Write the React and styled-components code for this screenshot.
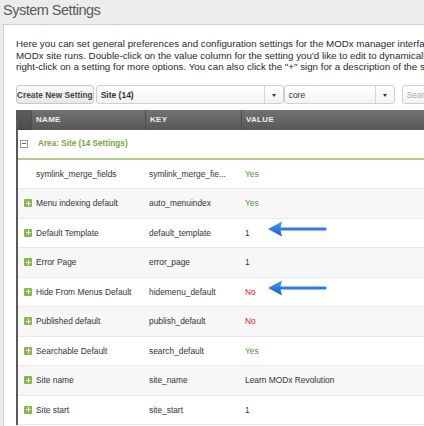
import React from "react";
import styled, { createGlobalStyle } from "styled-components";

const Global = createGlobalStyle`
  html, body { margin: 0; padding: 0; }
  body {
    background: #ececec;
    font-family: "Liberation Sans", Arial, Helvetica, sans-serif;
    overflow: hidden;
    width: 424px;
    height: 426px;
  }
`;

const Page = styled.div`
  width: 424px;
  height: 426px;
  overflow: hidden;
`;

const Title = styled.div`
  height: 24px;
  padding-left: 3px;
  font-size: 14.5px;
  letter-spacing: -0.5px;
  line-height: 21px;
  color: #5a5a5a;
  white-space: nowrap;
`;

const Panel = styled.div`
  margin-left: 3px;
  background: #fff;
  border: 1px solid #cdcdcd;
  border-right: none;
  padding: 13px 0 0 12px;
  height: 420px;
  box-sizing: border-box;
  overflow: hidden;
`;

const Intro = styled.div`
  font-size: 9.75px;
  line-height: 11.5px;
  color: #2a2a2a;
`;

const IntroLine = styled.div`
  white-space: nowrap;
`;

const Toolbar = styled.div`
  display: flex;
  align-items: center;
  margin-top: 12px;
  height: 20px;
`;

const Button = styled.div`
  width: 80px;
  height: 19px;
  box-sizing: border-box;
  border: 1px solid #c9c9c9;
  border-radius: 3px;
  background: linear-gradient(#fbfbfb, #e6e6e6);
  font-size: 8.3px;
  font-weight: bold;
  color: #444;
  display: flex;
  align-items: center;
  justify-content: center;
  white-space: nowrap;
  margin-right: 2px;
`;

const Combo = styled.div`
  width: ${(p) => p.$w}px;
  flex: none;
  height: 19px;
  box-sizing: border-box;
  border: 1px solid #cfcfcf;
  border-radius: 3px;
  background: linear-gradient(#ffffff, #f3f3f3);
  display: flex;
  align-items: stretch;
  margin-right: ${(p) => p.$mr || 0}px;
`;

const ComboText = styled.div`
  flex: 1;
  font-size: 8.5px;
  font-weight: ${(p) => (p.$bold ? "bold" : "normal")};
  color: ${(p) => (p.$muted ? "#aaa" : "#333")};
  display: flex;
  align-items: center;
  padding-left: 4px;
  white-space: nowrap;
  overflow: hidden;
`;

const Trigger = styled.div`
  width: 18px;
  border-left: 1px solid #d5d5d5;
  display: flex;
  align-items: center;
  justify-content: center;
  &::after {
    content: "";
    border-left: 2.5px solid transparent;
    border-right: 2.5px solid transparent;
    border-top: 3px solid #333;
    margin-top: 2px;
  }
`;

const Grid = styled.div`
  margin-top: 5px;
  border-left: 2px solid #5a5a5a;
  width: 420px;
`;

const HeaderRow = styled.div`
  display: grid;
  grid-template-columns: 13px 114px 96px 1fr;
  height: 20px;
  background: linear-gradient(#727272, #585858);
`;

const HeadCell = styled.div`
  font-size: 8px;
  font-weight: bold;
  color: #eee;
  display: flex;
  align-items: center;
  padding-left: ${(p) => (p.$first ? 0 : 4)}px;
  border-left: ${(p) => (p.$first ? "none" : "1px solid #4d4d4d")};
  background: ${(p) => (p.$first ? "linear-gradient(#5e5e5e, #4a4a4a)" : "none")};
  letter-spacing: 0.3px;
`;

const GroupRow = styled.div`
  height: 28px;
  border-bottom: 2px solid #b2cd8a;
  display: flex;
  align-items: center;
  padding-left: 2px;
`;

const MinusBox = styled.div`
  width: 8px;
  height: 8px;
  box-sizing: border-box;
  border: 1px solid #9a9a9a;
  background: #fff;
  display: flex;
  align-items: center;
  justify-content: center;
  margin-right: 10px;
  &::after {
    content: "";
    width: 4px;
    height: 1px;
    background: #666;
  }
`;

const GroupText = styled.span`
  font-size: 8.2px;
  font-weight: bold;
  color: #79a63c;
`;

const Row = styled.div`
  display: grid;
  grid-template-columns: 13px 114px 96px 1fr;
  height: 29.5px;
  box-sizing: border-box;
  border-bottom: 1px solid #e9e9e9;
  background: ${(p) => (p.$alt ? "#f7f7f7" : "#fff")};
  align-items: center;
  font-size: 8.4px;
  color: #333;
`;

const PlusCell = styled.div`
  display: flex;
  align-items: center;
  justify-content: flex-end;
`;

const Plus = styled.div`
  width: 8px;
  height: 8px;
  background: #86b94a;
  border-radius: 1px;
  position: relative;
  margin-right: -1px;
  &::before, &::after {
    content: "";
    position: absolute;
    background: #fff;
  }
  &::before { left: 1.5px; top: 3.5px; width: 5px; height: 1px; }
  &::after { left: 3.5px; top: 1.5px; width: 1px; height: 5px; }
`;

const Cell = styled.div`
  padding-left: ${(p) => p.$pl ?? 5}px;
  white-space: nowrap;
  position: relative;
  color: ${(p) => (p.$tone === "yes" ? "#4b9a3e" : p.$tone === "no" ? "#d9232e" : "#333")};
`;

const Arrow = styled.svg`
  position: absolute;
  left: 27px;
  top: -8px;
  width: 60px;
  height: 18px;
  overflow: visible;
`;

const rows = [
  { name: "symlink_merge_fields", key: "symlink_merge_fie...", value: "Yes", tone: "yes", plus: false },
  { name: "Menu indexing default", key: "auto_menuindex", value: "Yes", tone: "yes", plus: true },
  { name: "Default Template", key: "default_template", value: "1", plus: true, arrow: true },
  { name: "Error Page", key: "error_page", value: "1", plus: true },
  { name: "Hide From Menus Default", key: "hidemenu_default", value: "No", tone: "no", plus: true, arrow: true },
  { name: "Published default", key: "publish_default", value: "No", tone: "no", plus: true },
  { name: "Searchable Default", key: "search_default", value: "Yes", tone: "yes", plus: true },
  { name: "Site name", key: "site_name", value: "Learn MODx Revolution", plus: true },
  { name: "Site start", key: "site_start", value: "1", plus: true },
];

function BlueArrow() {
  return (
    <Arrow viewBox="0 0 60 18">
      <defs>
        <linearGradient id="ab" x1="0" y1="0" x2="0" y2="1">
          <stop offset="0" stopColor="#4a97f3" />
          <stop offset="1" stopColor="#1262d2" />
        </linearGradient>
      </defs>
      <path
        d="M0 9 L14 1.5 L12.5 7.4 L58 7.6 Q59.5 9 58 10.4 L12.5 10.6 L14 16.5 Z"
        fill="url(#ab)"
      />
    </Arrow>
  );
}

export default function App() {
  return (
    <Page>
      <Global />
      <Title>System Settings</Title>
      <Panel>
        <Intro>
          <IntroLine>Here you can set general preferences and configuration settings for the MODx manager interface and how your</IntroLine>
          <IntroLine>MODx site runs. Double-click on the value column for the setting you'd like to edit to dynamically edit the setting via the grid, or</IntroLine>
          <IntroLine>right-click on a setting for more options. You can also click the "+" sign for a description of the setting.</IntroLine>
        </Intro>
        <Toolbar>
          <Button>Create New Setting</Button>
          <Combo $w={188}>
            <ComboText $bold>Site (14)</ComboText>
            <Trigger />
          </Combo>
          <Combo $w={111} $mr={7}>
            <ComboText>core</ComboText>
            <Trigger />
          </Combo>
          <Combo $w={60}>
            <ComboText $muted>Search by key...</ComboText>
          </Combo>
        </Toolbar>
        <Grid>
          <HeaderRow>
            <HeadCell $first />
            <HeadCell>NAME</HeadCell>
            <HeadCell>KEY</HeadCell>
            <HeadCell>VALUE</HeadCell>
          </HeaderRow>
          <GroupRow>
            <MinusBox />
            <GroupText>Area: Site (14 Settings)</GroupText>
          </GroupRow>
          {rows.map((r, i) => (
            <Row key={r.key} $alt={i % 2 === 1}>
              <PlusCell>{r.plus && <Plus />}</PlusCell>
              <Cell $pl={5}>{r.name}</Cell>
              <Cell $pl={4}>{r.key}</Cell>
              <Cell $pl={4} $tone={r.tone}>
                {r.value}
                {r.arrow && <BlueArrow />}
              </Cell>
            </Row>
          ))}
        </Grid>
      </Panel>
    </Page>
  );
}
